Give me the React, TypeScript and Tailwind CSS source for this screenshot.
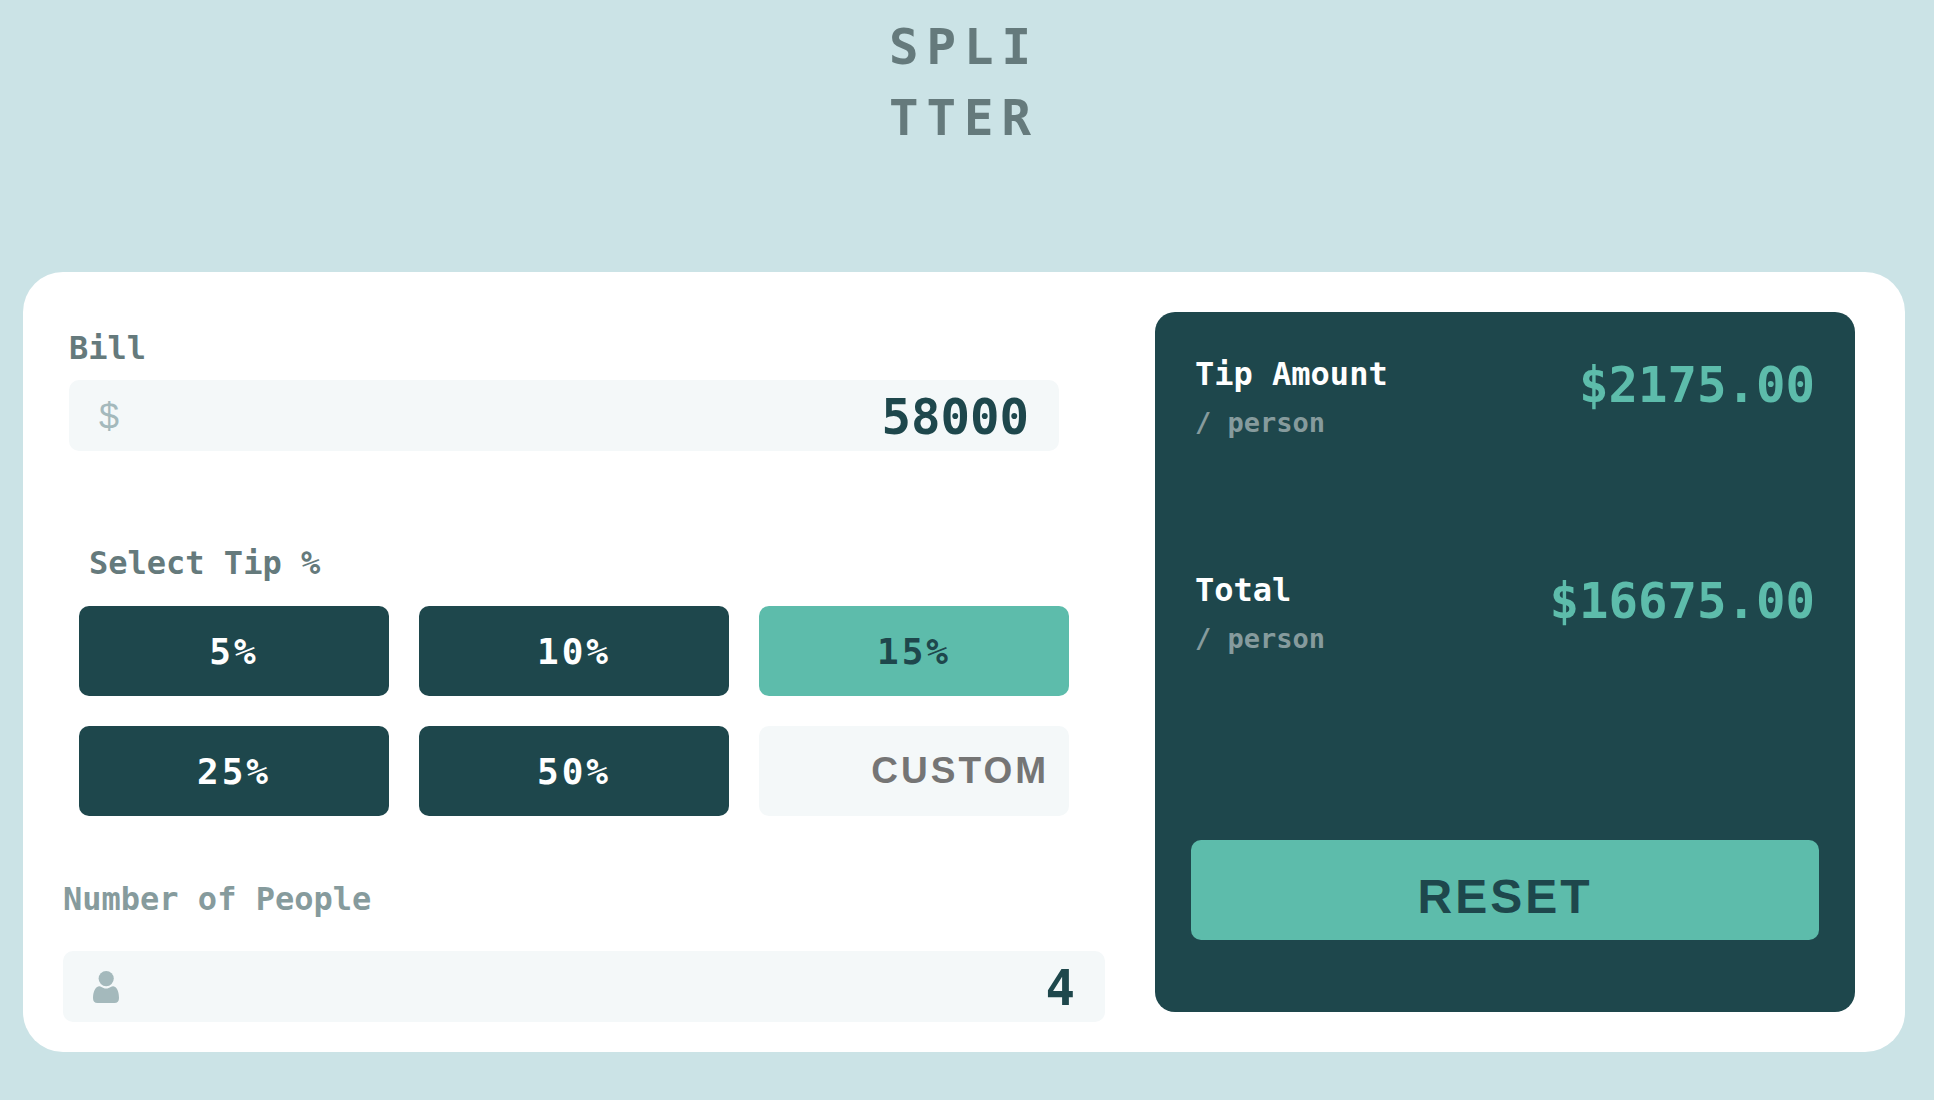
import { useState } from "react";

const tips = [5, 10, 15, 25, 50];

function PersonIcon() {
  return (
    <svg viewBox="0 0 26 32" className="h-8 w-[26px] shrink-0 fill-[#a4b9bc]" aria-hidden="true">
      <circle cx="13.2" cy="7.6" r="7.6" />
      <path d="M6 15.3c.9-.1 1.600.3 2.400.8 1.300.9 2.900 1.500 4.700 1.500s3.400-.6 4.700-1.500c.8-.5 1.600-.9 2.500-.8C24.300 15.800 26 21.400 26 27c0 3.200-1.500 5-4.600 5H4.600C1.500 32 0 30.200 0 27c0-5.600 2-11.300 6-11.700Z" />
    </svg>
  );
}

function Field({
  id,
  icon,
  value,
  onChange,
}: {
  id: string;
  icon: React.ReactNode;
  value: string;
  onChange: (value: string) => void;
}) {
  return (
    <div className="flex h-[71px] items-center rounded-[10px] bg-[#f4f8f9] px-[30px]">
      {icon}
      <input
        id={id}
        inputMode="numeric"
        value={value}
        onChange={(e) => onChange(e.target.value)}
        className="h-full min-w-0 flex-1 bg-transparent pt-1 text-right text-[49px] text-[#1e474c] outline-none"
      />
    </div>
  );
}

function Result({ title, amount }: { title: string; amount: string }) {
  return (
    <div className="flex h-[216px] items-start justify-between px-1 pt-0.5">
      <div>
        <h2 className="text-[32px] leading-[48px] text-white">{title}</h2>
        <p className="text-[27px] leading-[50px] text-[#869b9d]">/ person</p>
      </div>
      <output className="text-[49px] leading-[71px] text-[#5dbcab]">${amount}</output>
    </div>
  );
}

export default function App() {
  const [bill, setBill] = useState("58000");
  const [tip, setTip] = useState(15);
  const [custom, setCustom] = useState("");
  const [people, setPeople] = useState("4");

  const count = Number(people) || 0;
  const rate = custom ? Number(custom) || 0 : tip;
  const tipShare = count ? ((Number(bill) || 0) * rate) / 100 / count : 0;
  const totalShare = count ? (Number(bill) || 0) / count + tipShare : 0;

  const reset = () => {
    setBill("");
    setTip(0);
    setCustom("");
    setPeople("");
  };

  return (
    <div className="min-h-screen bg-[#cbe3e6] pr-[29px] pb-12 pl-[23px] font-['DejaVu_Sans_Mono',monospace] font-bold">
      <header className="flex h-[272px] justify-center pt-3">
        <h1 className="text-[49px] leading-[71px] tracking-[8px] text-[#657a7c]">
          SPLI
          <br />
          TTER
        </h1>
      </header>

      <main className="grid grid-cols-[1042fr_700fr] gap-x-[50px] rounded-[40px] bg-white pt-10 pr-[50px] pb-[30px] pl-10">
        <form className="flex flex-col" onSubmit={(e) => e.preventDefault()}>
          <div className="mr-[46px] ml-1.5 pt-3">
            <label htmlFor="bill" className="block pb-2 text-[32px] leading-[48px] text-[#657a7c]">
              Bill
            </label>
            <Field
              id="bill"
              value={bill}
              onChange={setBill}
              icon={<span className="pt-0.5 font-['Liberation_Sans',sans-serif] text-4xl font-normal text-[#a4b9bc]">$</span>}
            />
          </div>

          <fieldset className="mt-[88px] mr-9 ml-4">
            <legend className="px-2.5 pb-[19px] text-[32px] leading-[48px] text-[#657a7c]">Select Tip %</legend>
            <div className="grid grid-cols-3 gap-[30px]">
              {tips.map((t) => (
                <button
                  key={t}
                  type="button"
                  aria-pressed={t === tip}
                  onClick={() => setTip(t)}
                  className={
                    t === tip
                      ? "h-[90px] rounded-[10px] bg-[#5dbcab] pt-0.5 text-4xl tracking-[3px] text-[#1e474c]"
                      : "h-[90px] rounded-[10px] bg-[#1e474c] pt-0.5 text-4xl tracking-[3px] text-white"
                  }
                >
                  {t}%
                </button>
              ))}
              <input
                aria-label="Custom tip"
                placeholder="CUSTOM"
                value={custom}
                onChange={(e) => setCustom(e.target.value)}
                className="h-[90px] w-full min-w-0 rounded-[10px] bg-[#f4f8f9] px-5 text-right font-['Liberation_Sans',sans-serif] text-[37px] tracking-[3px] text-[#1e474c] outline-none placeholder:text-[#757575]"
              />
            </div>
          </fieldset>

          <label htmlFor="people" className="mt-[59px] block pb-7 text-[32px] leading-[48px] text-[#869b9d]">
            Number of People
          </label>
          <Field id="people" value={people} onChange={setPeople} icon={<PersonIcon />} />
        </form>

        <section className="flex h-[700px] flex-col rounded-[20px] bg-[#1e474c] px-9 pt-9 pb-[72px]">
          <Result title="Tip Amount" amount={tipShare.toFixed(2)} />
          <Result title="Total" amount={totalShare.toFixed(2)} />
          <button
            type="button"
            onClick={reset}
            className="mt-auto h-[100px] rounded-[10px] bg-[#5dbcab] pt-3.5 font-['Liberation_Sans',sans-serif] text-5xl tracking-[3px] text-[#1e474c]"
          >
            RESET
          </button>
        </section>
      </main>
    </div>
  );
}
